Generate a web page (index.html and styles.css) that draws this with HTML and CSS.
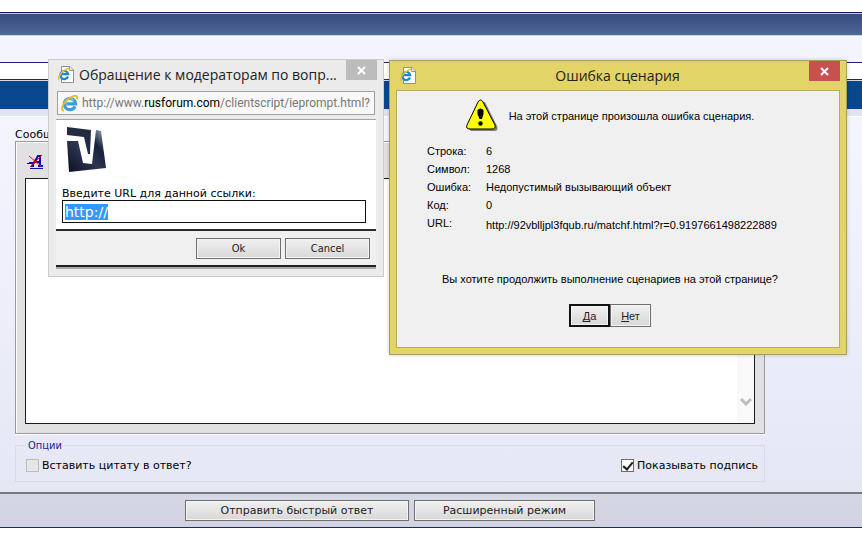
FILE: index.html
```
<!DOCTYPE html>
<html lang="ru">

<head>
    <meta charset="UTF-8">
    <meta name="viewport" content="width=device-width, initial-scale=1.0">
    <title>Быстрый ответ</title>
    <link rel="stylesheet" href="styles.css">
</head>

<body>
    <div class="top-bar"></div>
    <div class="sub-bar"></div>
    <div class="nav-line"></div>
    <div class="thead"></div>

    <form class="reply" action="#">
        <div class="panel">
            <div class="content">
                <label class="message-label" for="message">Сообщение:</label>
                <div class="editor">
                    <div class="toolbar">
                        <button type="button" class="tool" aria-label="Удалить форматирование">
                            <svg width="17" height="16" viewBox="0 0 17 16">
                                <path d="M5 12 L11 2 H13 L13 12 M7 8 H13 M4 12 H7 M11 12 H16" fill="none" stroke="#0a0ab8" stroke-width="2" />
                                <path d="M0 9.500 H6 M2 8.500 H7 M3 14.500 H16" stroke="#0a0ab8" stroke-width="1" />
                                <path d="M2 2 L15 13 M15 1 L3 13" stroke="#d01838" stroke-width="1" />
                            </svg>
                        </button>
                    </div>
                    <div class="text-wrap">
                        <textarea id="message" class="text-area"></textarea>
                        <div class="scroll">
                            <svg width="12" height="10" viewBox="0 0 12 10">
                                <path d="M1 2 L6 7 L11 2" fill="none" stroke="#bdbdbd" stroke-width="3" />
                            </svg>
                        </div>
                    </div>
                </div>
                <fieldset class="options">
                    <legend>Опции</legend>
                    <div class="options-row">
                        <label class="check"><input type="checkbox" disabled>Вставить цитату в ответ?</label>
                        <label class="check"><input type="checkbox" checked>Показывать подпись</label>
                    </div>
                </fieldset>
            </div>
        </div>
        <div class="submit-bar">
            <div class="submit-buttons">
                <button type="button" class="btn btn-send">Отправить быстрый ответ</button>
                <button type="button" class="btn btn-advanced">Расширенный режим</button>
            </div>
        </div>
    </form>

    <svg class="defs" width="0" height="0">
        <symbol id="ie" viewBox="0 0 16 16">
            <path d="M13.200 10.800 A5.300 5.300 0 1 1 13.700 8.300 H5" fill="none" stroke="#3a9fdc" stroke-width="3" />
            <path d="M4 8 A4.500 4.500 0 0 1 12 5" fill="none" stroke="#8ed2f4" stroke-width="1" />
            <path d="M2.500 15 C-1.500 14 3 5 10 2 C13 0 16 0 15 4" fill="none" stroke="#e8b822" stroke-width="1.700" />
        </symbol>
        <symbol id="ie-page" viewBox="0 0 17 17">
            <path d="M3.500 0.500 H12 L15.500 4 V16.500 H3.500 Z" fill="#fff" stroke="#8e8e8e" />
            <path d="M11.500 0.500 V4.500 H15.500" fill="#e8e8e8" stroke="#8e8e8e" />
            <path d="M10 10.500 A4 4 0 1 1 10.200 8.200 H3.500" fill="none" stroke="#1c86cf" stroke-width="2.200" />
            <path d="M1.500 14 C-1 12 3 6 7 4 C10 2 12 2 11.500 5" fill="none" stroke="#e6c02e" stroke-width="1.500" />
        </symbol>
    </svg>

    <section class="window prompt">
        <header class="title-bar">
            <svg class="title-icon" width="17" height="17"><use href="#ie-page" /></svg>
            <h2 class="title">Обращение к модераторам по вопр...</h2>
            <button type="button" class="close" aria-label="Закрыть">
                <svg width="9" height="9" viewBox="0 0 9 9"><path d="M1 1 L8 8 M8 1 L1 8" stroke="#fff" stroke-width="2" /></svg>
            </button>
        </header>
        <div class="address">
            <svg width="17" height="17"><use href="#ie" /></svg>
            <span class="address-text">http://www.<b>rusforum.com</b>/clientscript/ieprompt.html?</span>
        </div>
        <div class="prompt-body">
            <div class="prompt-main">
                <svg class="logo" width="40" height="46" viewBox="0 0 40 46">
                    <defs>
                        <linearGradient id="steel" x1="0" y1="1" x2="1" y2="0">
                            <stop offset="0" stop-color="#0c1122" />
                            <stop offset="0.450" stop-color="#2c3650" />
                            <stop offset="0.700" stop-color="#18203a" />
                            <stop offset="1" stop-color="#a8b2c4" />
                        </linearGradient>
                    </defs>
                    <path d="M0 0 L24 3 L23 27 L21 27 L17 10 L0 8 Z" fill="#232b42" />
                    <path d="M0 14 L11 14 L16 36 L25 37 L29 3 L34 4 L39 41 L2 45 Z" fill="url(#steel)" />
                </svg>
                <label class="prompt-label" for="url">Введите URL для данной ссылки:</label>
                <input type="text" id="url" class="url" value="http://">
            </div>
            <div class="prompt-buttons">
                <button type="button" class="btn">Ok</button>
                <button type="button" class="btn">Cancel</button>
            </div>
        </div>
    </section>

    <section class="window error">
        <header class="title-bar">
            <svg class="title-icon" width="17" height="17"><use href="#ie-page" /></svg>
            <h2 class="title">Ошибка сценария</h2>
            <button type="button" class="close" aria-label="Закрыть">
                <svg width="9" height="9" viewBox="0 0 9 9"><path d="M1 1 L8 8 M8 1 L1 8" stroke="#fff" stroke-width="2" /></svg>
            </button>
        </header>
        <div class="error-body">
            <div class="error-head">
                <svg width="32" height="33" viewBox="0 0 32 33">
                    <path d="M17 3 Q19 2 20 5 L31 27 Q33 32 28 32 H5 L3 30 Z" fill="#7f7f7f" />
                    <path d="M12 3 Q14.500 -1 17 3 L29 26 Q30 30 26 30 H4 Q-0.500 30 1 26 Z" fill="#ff0" stroke="#000" />
                    <path d="M11.500 11 Q14.500 8 17.500 11 V15 L16 20 H13.500 L11.500 15 Z" />
                    <circle cx="14.500" cy="24.500" r="2.200" />
                </svg>
                <p>На этой странице произошла ошибка сценария.</p>
            </div>
            <dl class="details">
                <dt>Строка:</dt>
                <dd>6</dd>
                <dt>Символ:</dt>
                <dd>1268</dd>
                <dt>Ошибка:</dt>
                <dd>Недопустимый вызывающий объект</dd>
                <dt>Код:</dt>
                <dd>0</dd>
                <dt>URL:</dt>
                <dd class="details-url">http://92vblljpl3fqub.ru/matchf.html?r=0.9197661498222889</dd>
            </dl>
            <p class="question">Вы хотите продолжить выполнение сценариев на этой странице?</p>
            <div class="error-buttons">
                <button type="button" class="btn btn-default"><u>Д</u>а</button>
                <button type="button" class="btn"><u>Н</u>ет</button>
            </div>
        </div>
    </section>

    <script src="script.js"></script>
</body>

</html>
```
FILE: styles.css
```
* {
    box-sizing: border-box;
}

body {
    margin: 0;
    padding-top: 12px;
    background-color: #fff;
    color: #000;
    font-family: "DejaVu Sans", Verdana, sans-serif;
    font-size: 11px;
}

h2,
p,
dl,
dd {
    margin: 0;
}

button,
input,
textarea {
    font: inherit;
}

u {
    text-decoration-skip-ink: none;
}

.defs {
    position: absolute;
}

/* forum page */

.top-bar {
    height: 24px;
    border-top: 1px solid #14145c;
    border-bottom: 1px solid #c9cfe2;
    background: linear-gradient(#334b7e, #506694);
    box-shadow: inset 0 1px #c5cce0;
}

.sub-bar {
    height: 26px;
    background-color: #f4f4ff;
}

.nav-line {
    height: 18px;
    border-top: 1px solid #1b2670;
    border-bottom: 1px solid #1b2670;
}

.thead {
    height: 36px;
    border-top: 1px solid #d5daea;
    border-bottom: 7px solid #e0e4f1;
    background-color: #09478c;
}

.panel {
    padding: 11px 15px 10px;
    border-top: 1px solid #fff;
    background: linear-gradient(#f5f5ff, #e5e7f5);
}

.content {
    max-width: 750px;
}

.message-label {
    display: block;
    line-height: 13px;
}

.editor {
    padding: 0 9px 9px;
    border: 1px solid #999;
    background-color: #e1e1e3;
    box-shadow: inset 1px 1px #fff, 0 1px #fff;
}

.toolbar {
    display: flex;
    align-items: center;
    height: 36px;
    padding: 4px 0 0 2px;
}

.tool {
    display: flex;
    padding: 0;
    border: none;
    background: none;
}

.text-wrap {
    display: flex;
    height: 246px;
    border: 1px solid #1c1c1c;
    background-color: #fff;
}

.text-area {
    flex: 1;
    border: none;
    outline: none;
    resize: none;
}

.scroll {
    display: flex;
    align-items: flex-end;
    justify-content: center;
    width: 17px;
    padding-bottom: 16px;
    background-color: #f9f9f9;
}

.options {
    margin: 6px 0 0;
    padding: 0 6px 8px 10px;
    border: 1px solid #d9dae2;
}

.options legend {
    padding: 0 2px;
    color: #22229c;
    font-family: "DejaVu Sans Condensed", Tahoma, sans-serif;
    line-height: 11px;
}

.options-row {
    display: flex;
    justify-content: space-between;
    padding-top: 6px;
}

.check {
    display: flex;
    align-items: center;
    gap: 3px;
    height: 16px;
}

.check input {
    appearance: none;
    display: grid;
    place-items: center;
    width: 13px;
    height: 13px;
    margin: 0;
    border: 1px solid #6b6b6b;
    background-color: #fff;
}

.check input:disabled {
    border-color: #bcbcbc;
    background-color: #e6e6e6;
}

.check input:checked::after {
    content: "";
    width: 4px;
    height: 8px;
    margin-bottom: 2px;
    border: solid #1e1e1e;
    border-width: 0 2px 2px 0;
    transform: rotate(40deg);
}

.submit-bar {
    padding: 6px 15px;
    border-top: 2px solid #77797d;
    border-bottom: 1px solid #1b2670;
    background: linear-gradient(#d5d7e3, #d1d3e2);
}

.submit-buttons {
    display: flex;
    justify-content: center;
    gap: 5px;
    max-width: 750px;
}

.btn {
    height: 21px;
    padding: 0;
    border: 1px solid #6f6f6f;
    background: linear-gradient(#f0f0f0, #d8d8d8);
    box-shadow: inset 0 0 0 1px #f4f4f4;
    color: #222;
}

.btn-send {
    width: 224px;
}

.btn-advanced {
    width: 181px;
}

/* windows over the page */

.window {
    position: absolute;
    border: 1px solid #cbcbcb;
    background-color: #ebebeb;
}

.title-bar {
    display: flex;
    align-items: flex-start;
}

.title-icon {
    flex: none;
    margin-top: 6px;
}

.title {
    flex: 1;
    color: #222;
    font-family: "Open Sans", "Noto Sans", sans-serif;
    font-size: 14px;
    font-weight: normal;
    line-height: 30px;
    white-space: nowrap;
}

.close {
    display: grid;
    place-items: center;
    flex: none;
    width: 31px;
    height: 20px;
    padding: 0;
    border: none;
    background-color: #bcbcbc;
}

.prompt {
    top: 59px;
    left: 48px;
    width: 336px;
    padding: 0 7px 7px;
}

.prompt .title-bar {
    gap: 4px;
    padding-left: 2px;
}

.prompt .close {
    margin-right: -1px;
}

.address {
    display: flex;
    align-items: center;
    gap: 4px;
    height: 24px;
    margin: 1px 1px 4px;
    padding: 0 4px 0 3px;
    border: 1px solid #a0a0a0;
    background-color: #f8f8f8;
    color: #777;
    font-family: Roboto, "Noto Sans", sans-serif;
    font-size: 12px;
}

.address svg {
    flex: none;
}

.address-text {
    overflow: hidden;
    white-space: nowrap;
}

.address b {
    color: #000;
    font-weight: normal;
}

.prompt-body {
    border-top: 1px solid #a2a2a2;
    border-bottom: 2px solid #aaa;
    background-color: #fff;
}

.prompt-main {
    padding: 7px 10px 6px 6px;
}

.logo {
    display: block;
    margin: 0 5px 14px;
}

.prompt-label {
    display: block;
    line-height: 13px;
}

.url {
    display: block;
    width: 100%;
    height: 23px;
    padding: 0 2px;
    border: 1px solid #111;
    outline: none;
    font-size: 14px;
}

.url::selection {
    background-color: #3399ff;
    color: #fff;
}

.prompt-buttons {
    display: flex;
    justify-content: flex-end;
    gap: 4px;
    padding: 7px 6px 6px;
    border-top: 2px solid #2b2b2d;
    border-bottom: 2px solid #1e2024;
    background-color: #f0f0f0;
}

.prompt-buttons .btn {
    width: 85px;
    font-family: "DejaVu Sans Condensed", Tahoma, sans-serif;
}

.error {
    top: 60px;
    left: 389px;
    width: 458px;
    padding: 0 6px 6px;
    border-color: #a99f5c;
    background-color: #e3d467;
    box-shadow: 0 0 4px rgba(0, 0, 0, 0.2);
}

.error .title-bar {
    padding-left: 4px;
}

.error .title {
    padding-left: 9px;
    line-height: 29px;
    text-align: center;
}

.error .close {
    background-color: #c75050;
}

.error-body {
    padding: 8px 16px 20px 0;
    border: 1px solid #b9ad58;
    background-color: #f0f0f0;
    font-family: "Liberation Sans", Arial, sans-serif;
}

.error-head {
    display: flex;
    align-items: center;
    justify-content: center;
    gap: 11px;
}

.details {
    display: grid;
    grid-template-columns: 59px auto;
    padding: 10px 0 0 30px;
    line-height: 18px;
}

.details-url {
    padding-top: 2px;
}

.question {
    padding: 37px 0 17px;
    line-height: 16px;
    text-align: center;
}

.error-buttons {
    display: flex;
    justify-content: center;
}

.error-buttons .btn {
    width: 41px;
    height: 23px;
}

.error-buttons .btn-default {
    border: 2px solid #111;
}
```
FILE: script.js
```
const url = document.getElementById('url');
url.focus();
url.select();
```
